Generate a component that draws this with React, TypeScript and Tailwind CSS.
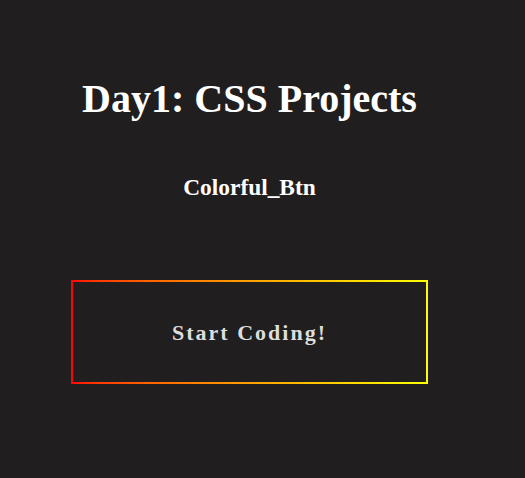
export default function App() {
  return (
    <div className="min-h-screen bg-[#201e1f] font-['Liberation_Serif',serif]">
      <div className="flex w-[499px] flex-col items-center pt-[76px]">
        <h1 className="text-[40px] leading-[46px] font-bold text-white">Day1: CSS Projects</h1>
        <h3 className="mt-[52px] text-[23.4px] leading-[27px] font-bold text-white">Colorful_Btn</h3>
        <div className="mt-[79px] bg-linear-to-r from-[#ff0000] to-[#ffff00] p-[2px]">
          <button className="flex h-[100px] w-[353px] items-center justify-center bg-[#201e1f] text-[22px] font-bold tracking-[2px] text-[#dddddd]">
            Start Coding!
          </button>
        </div>
      </div>
    </div>
  );
}
